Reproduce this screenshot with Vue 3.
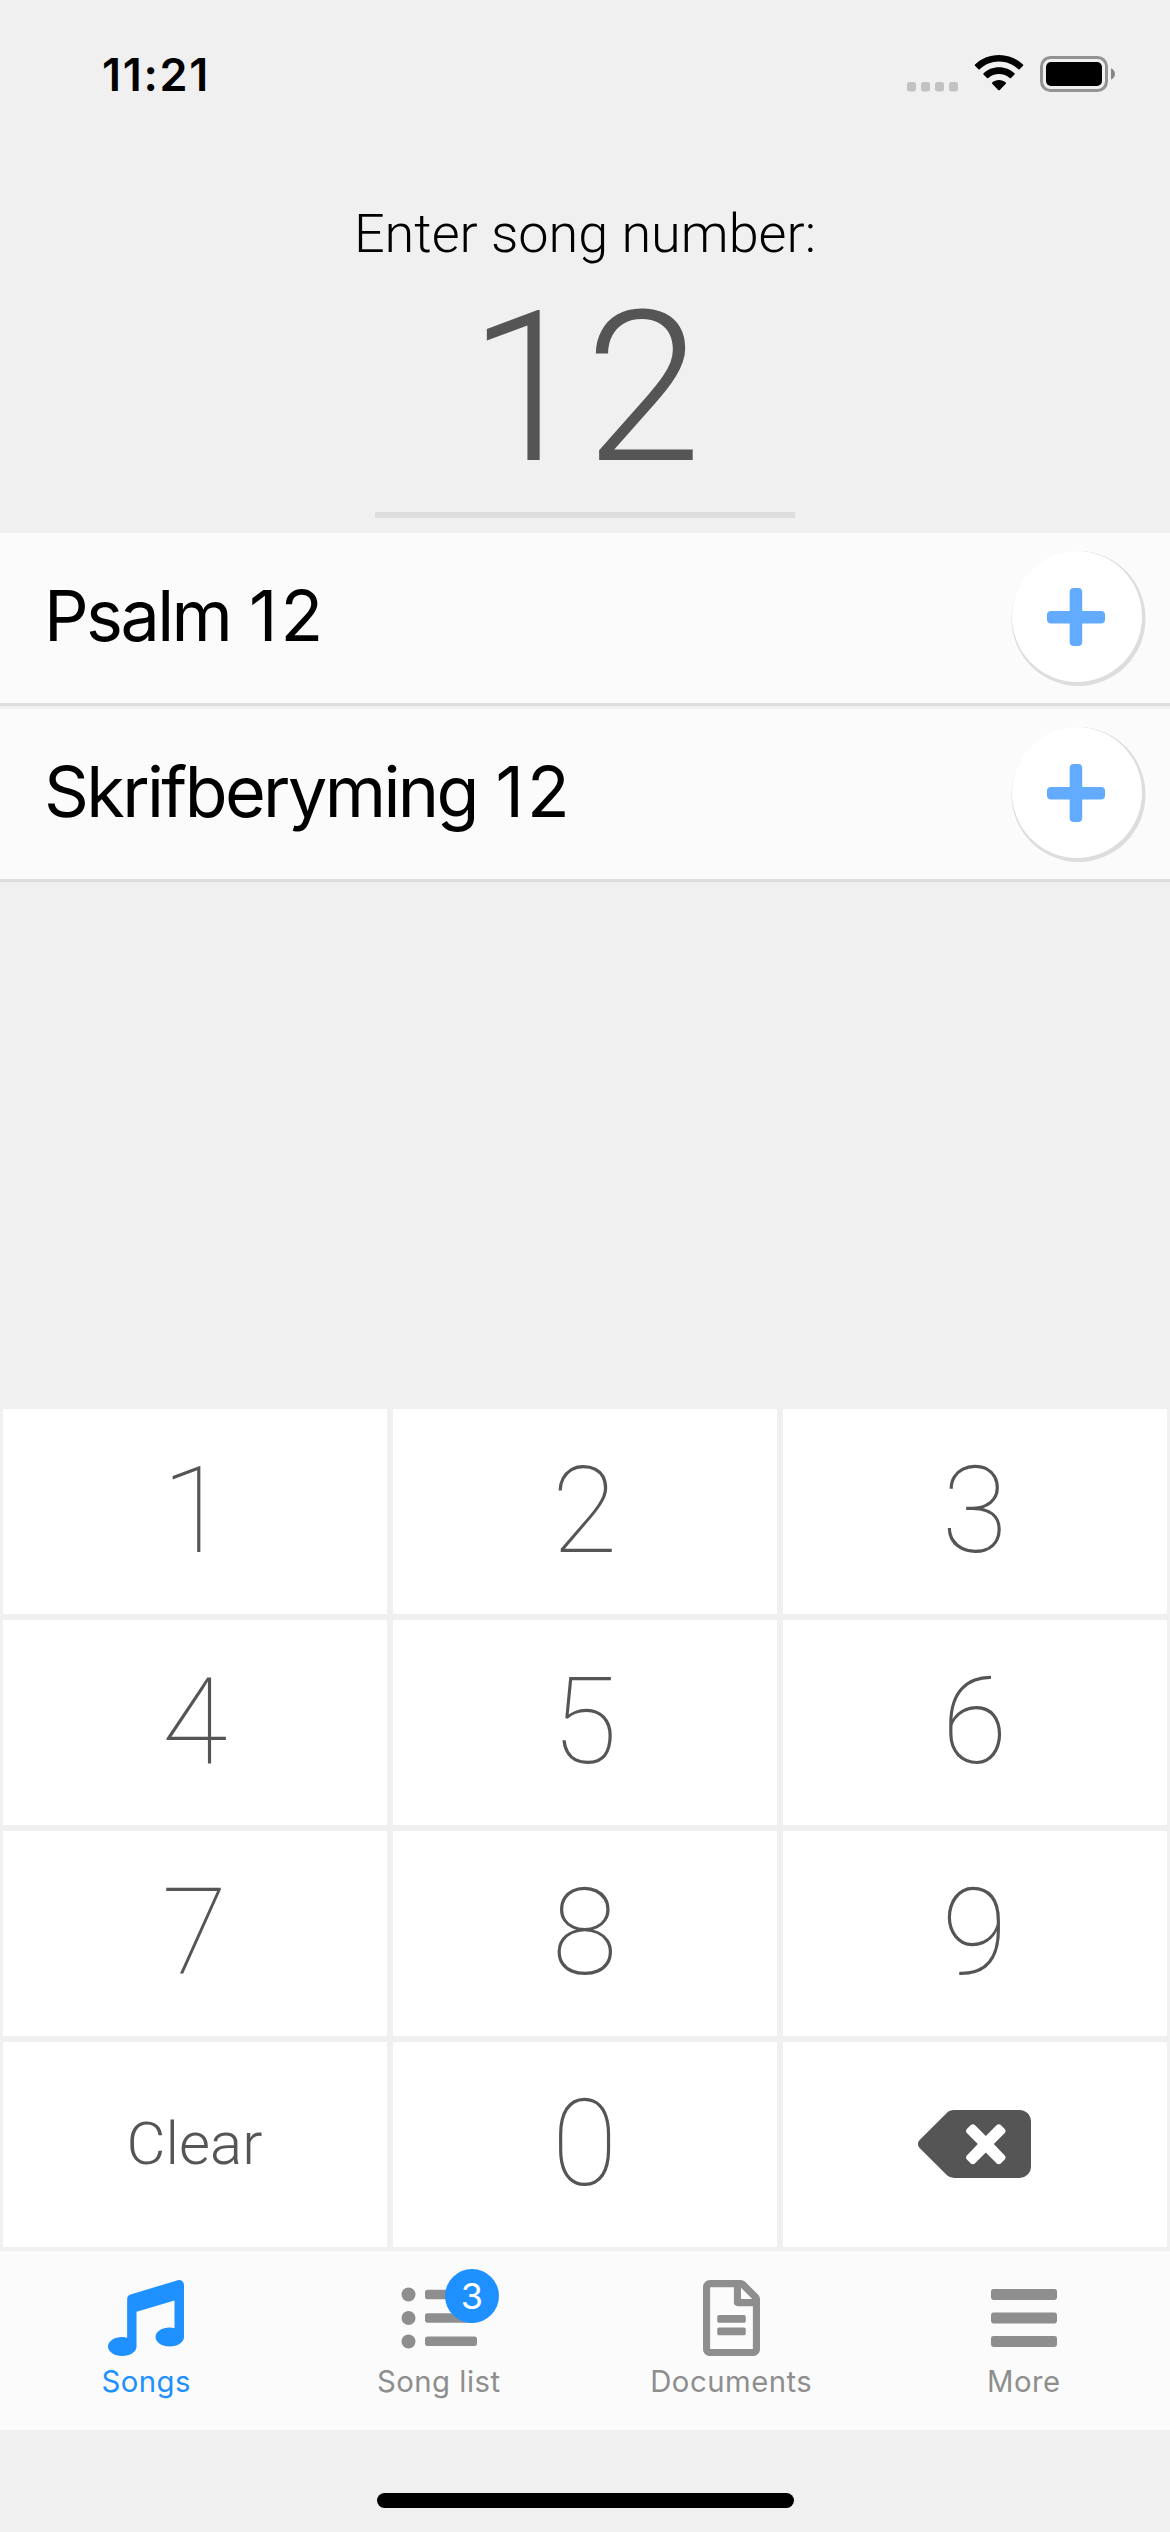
<script setup>
import { ref } from 'vue'

const entry = ref('12')
const books = ['Psalm', 'Skrifberyming']
const digits = ['1', '2', '3', '4', '5', '6', '7', '8', '9']
const listCount = ref(3)

function press(d) {
  entry.value += d
}
function clearEntry() {
  entry.value = ''
}
function erase() {
  entry.value = entry.value.slice(0, -1)
}
</script>

<template>
  <div class="screen">
    <header class="status">
      <span class="time">11:21</span>
      <div class="indicators">
        <svg class="dots" width="52" height="10" viewBox="0 0 52 10">
          <rect x="0" y="0" width="9" height="9.500" rx="2.500" />
          <rect x="14" y="0" width="9" height="9.500" rx="2.500" />
          <rect x="28" y="0" width="9" height="9.500" rx="2.500" />
          <rect x="42" y="0" width="9" height="9.500" rx="2.500" />
        </svg>
        <svg class="wifi" width="50" height="38" viewBox="0 0 50 38">
          <path d="M25 1C34.500 1 43 4.700 49 10.600Q49.500 11.200 49 11.800L45.600 15.200Q44.900 15.800 44.300 15.200C39 10.300 32.300 7.500 25 7.500S11 10.300 5.700 15.200Q5.100 15.800 4.400 15.200L1 11.800Q.5 11.200 1 10.600C7 4.700 15.500 1 25 1Z" />
          <path d="M25 13.300C31 13.300 36.500 15.600 40.500 19.300Q41 20 40.500 20.600L37 24Q36.400 24.600 35.700 24C32.800 21.400 29 19.900 25 19.900S17.200 21.400 14.300 24Q13.600 24.600 13 24L9.500 20.600Q9 20 9.500 19.300C13.500 15.600 19 13.300 25 13.300Z" />
          <path d="M25 26C27.600 26 30 26.900 31.800 28.400Q32.400 29.100 31.800 29.700L25.800 36Q25 36.700 24.200 36L18.200 29.700Q17.600 29.100 18.200 28.400C20 26.900 22.400 26 25 26Z" />
        </svg>
        <svg class="battery" width="76" height="36" viewBox="0 0 76 36">
          <rect x="1.500" y="1.500" width="65" height="33" rx="9" fill="none" stroke="#939393" stroke-width="3" />
          <rect x="6" y="6" width="56" height="24" rx="5" />
          <path d="M71 12.300C76.300 14.500 76.300 21.500 71 23.700Z" fill="#858585" />
        </svg>
      </div>
    </header>

    <section class="entry">
      <div class="prompt">Enter song number:</div>
      <div class="number">{{ entry }}</div>
    </section>

    <ul class="results">
      <li v-for="book in books" :key="book" class="result">
        <span class="result-name"><span class="book">{{ book }}</span> {{ entry }}</span>
        <button class="add" aria-label="Add">
          <svg width="58" height="58" viewBox="0 0 58 58">
            <rect x="0" y="23" width="58" height="12.500" rx="4" />
            <rect x="22.700" y="0" width="12.500" height="58" rx="4" />
          </svg>
        </button>
      </li>
    </ul>

    <section class="keypad">
      <button v-for="d in digits" :key="d" class="key" @click="press(d)"><span>{{ d }}</span></button>
      <button class="key clear" @click="clearEntry"><span>Clear</span></button>
      <button class="key" @click="press('0')"><span>0</span></button>
      <button class="key" aria-label="Backspace" @click="erase">
        <svg class="erase" width="113" height="68" viewBox="0 0 640 384">
          <path fill-rule="evenodd" d="M576 0H205.300A64 64 0 0 0 160 18.700L9.400 169.400c-12.500 12.500-12.500 32.800 0 45.300L160 365.300A64 64 0 0 0 205.300 384H576c35.300 0 64-28.700 64-64V64c0-35.300-28.700-64-64-64zM491.300 257.400c6.200 6.200 6.200 16.400 0 22.600l-22.600 22.600c-6.200 6.200-16.400 6.200-22.600 0L384 240.500l-62.100 62.100c-6.200 6.200-16.400 6.200-22.600 0L276.700 280c-6.200-6.200-6.200-16.400 0-22.600L338.800 192l-62.100-62.100c-6.200-6.200-6.200-16.400 0-22.600l22.600-22.600c6.200-6.200 16.400-6.200 22.600 0L384 146.700l62.100-62.100c6.200-6.200 16.400-6.200 22.600 0l22.600 22.600c6.200 6.200 6.200 16.400 0 22.600L429.300 192z" />
        </svg>
      </button>
    </section>

    <nav class="tabs">
      <a class="tab active">
        <svg width="76" height="76" viewBox="0 0 512 512">
          <path d="M470.400 1.500l-318.400 95.800A32 32 0 0 0 129 128v261.400A139 139 0 0 0 96 384c-53 0-96 28.700-96 64s43 64 96 64 96-28.700 96-64V214.300l256-75.900v187A139 139 0 0 0 416 320c-53 0-96 28.700-96 64s43 64 96 64 96-28.700 96-64V32A32 32 0 0 0 470.400 1.500z" />
        </svg>
        <span class="label">Songs</span>
      </a>
      <a class="tab">
        <span class="icon-wrap">
          <svg width="76" height="76" viewBox="0 0 76 76">
            <circle cx="7.500" cy="14.500" r="7" /><circle cx="7.500" cy="38" r="7" /><circle cx="7.500" cy="61.500" r="7" />
            <rect x="24" y="9.800" width="52" height="9.500" rx="2.400" /><rect x="24" y="33.200" width="52" height="9.500" rx="2.400" /><rect x="24" y="56.600" width="52" height="9.500" rx="2.400" />
          </svg>
          <span class="badge">{{ listCount }}</span>
        </span>
        <span class="label">Song list</span>
      </a>
      <a class="tab">
        <svg width="57" height="76" viewBox="0 0 384 512">
          <path d="M288 248v28c0 6.600-5.400 12-12 12H108c-6.600 0-12-5.400-12-12v-28c0-6.600 5.400-12 12-12h168c6.600 0 12 5.400 12 12zm-12 72H108c-6.600 0-12 5.400-12 12v28c0 6.600 5.400 12 12 12h168c6.600 0 12-5.400 12-12v-28c0-6.600-5.400-12-12-12zm108-188.100V464c0 26.500-21.500 48-48 48H48c-26.500 0-48-21.500-48-48V48C0 21.500 21.500 0 48 0h204.100C264.800 0 277 5.100 286 14.100L369.900 98c9 8.900 14.100 21.200 14.100 33.900zm-128-80V128h76.100L256 51.900zM336 464V176H232c-13.300 0-24-10.700-24-24V48H48v416h288z" />
        </svg>
        <span class="label">Documents</span>
      </a>
      <a class="tab">
        <svg width="66" height="76" viewBox="0 0 66 76">
          <rect x="0" y="9" width="66" height="11" rx="2.400" /><rect x="0" y="32.500" width="66" height="11" rx="2.400" /><rect x="0" y="56" width="66" height="11" rx="2.400" />
        </svg>
        <span class="label">More</span>
      </a>
    </nav>

    <footer class="home"><div class="home-bar"></div></footer>
  </div>
</template>

<style>
body {
  margin: 0;
  background: #f0f0f0;
}
</style>

<style scoped>
.screen {
  width: 1170px;
  height: 2532px;
  display: flex;
  flex-direction: column;
  background: #f0f0f0;
  color: #000;
  font-family: Inter, "Liberation Sans", sans-serif;
  overflow: hidden;
}
svg {
  display: block;
  fill: currentColor;
  overflow: visible;
}
button {
  border: 0;
  padding: 0;
  margin: 0;
  font: inherit;
  color: inherit;
}
.status {
  height: 141px;
  flex: none;
  display: flex;
  justify-content: space-between;
  padding: 0 54px 0 102px;
  box-sizing: border-box;
}
.time {
  font-size: 45px;
  font-weight: 600;
  line-height: 54px;
  margin-top: 48px;
  letter-spacing: 1.700px;
}
.indicators {
  display: flex;
  align-items: flex-start;
}
.dots {
  color: #c2c2c2;
  margin: 82px 15px 0 0;
}
.wifi {
  margin: 54px 16px 0 0;
}
.battery {
  margin-top: 56px;
}
.entry {
  height: 392px;
  flex: none;
  display: flex;
  flex-direction: column;
  align-items: center;
  font-family: Roboto, sans-serif;
  font-weight: 300;
}
.prompt {
  font-size: 54px;
  line-height: 64px;
  margin-top: 61px;
}
.number {
  width: 420px;
  box-sizing: border-box;
  height: 252px;
  border-bottom: 6px solid #ddd;
  color: #555;
  font-size: 210px;
  line-height: 244px;
  text-align: center;
}
.results {
  list-style: none;
  margin: 0;
  padding: 0;
  height: 876px;
  flex: none;
}
.result {
  height: 170px;
  margin-bottom: 3px;
  display: flex;
  align-items: center;
  justify-content: space-between;
  padding: 0 28px 0 44px;
  background: #fbfbfb;
  border-bottom: 3px solid #ddd;
}
.result-name {
  font-size: 70px;
  line-height: 84px;
  margin-top: -5px;
  letter-spacing: 3px;
  word-spacing: -4px;
}
.book {
  letter-spacing: -2.600px;
}
.add {
  width: 130px;
  height: 131px;
  margin-top: -3px;
  padding-right: 2px;
  box-sizing: border-box;
  border-radius: 50%;
  background: #fff;
  color: #62abff;
  box-shadow: 1.500px 2px 0 2px #ddd;
  display: flex;
  align-items: center;
  justify-content: center;
}
.keypad {
  height: 842px;
  flex: none;
  display: grid;
  grid-template-columns: repeat(3, 384px);
  grid-auto-rows: 205px;
  gap: 6px;
  padding: 0 3px;
  box-sizing: border-box;
  font-family: Roboto, sans-serif;
}
.key {
  background: #fff;
  color: #555;
  font-size: 120px;
  font-weight: 100;
  line-height: 140px;
  display: flex;
  align-items: center;
  justify-content: center;
  padding: 0 1px 2px 0;
  box-sizing: border-box;
}
.clear {
  font-size: 60px;
  font-weight: 300;
}
.tabs {
  height: 179px;
  flex: none;
  display: grid;
  grid-template-columns: repeat(4, 1fr);
  background: #fbfbfb;
  color: #8e8e8e;
}
.tab {
  display: flex;
  flex-direction: column;
  align-items: center;
  padding-top: 29px;
}
.active {
  color: #1e90ff;
}
.icon-wrap {
  position: relative;
}
.badge {
  position: absolute;
  left: 44px;
  top: -11px;
  width: 54px;
  height: 54px;
  border-radius: 50%;
  background: #1e90ff;
  color: #fff;
  font-size: 36px;
  line-height: 54px;
  text-align: center;
}
.label {
  font-size: 29.300px;
  line-height: 36px;
  margin-top: 8px;
  letter-spacing: 0.500px;
}
.home {
  flex: 1;
  display: flex;
  justify-content: center;
  padding: 63px 0 0 1px;
}
.home-bar {
  width: 417px;
  height: 15px;
  border-radius: 8px;
  background: #000;
}
</style>
